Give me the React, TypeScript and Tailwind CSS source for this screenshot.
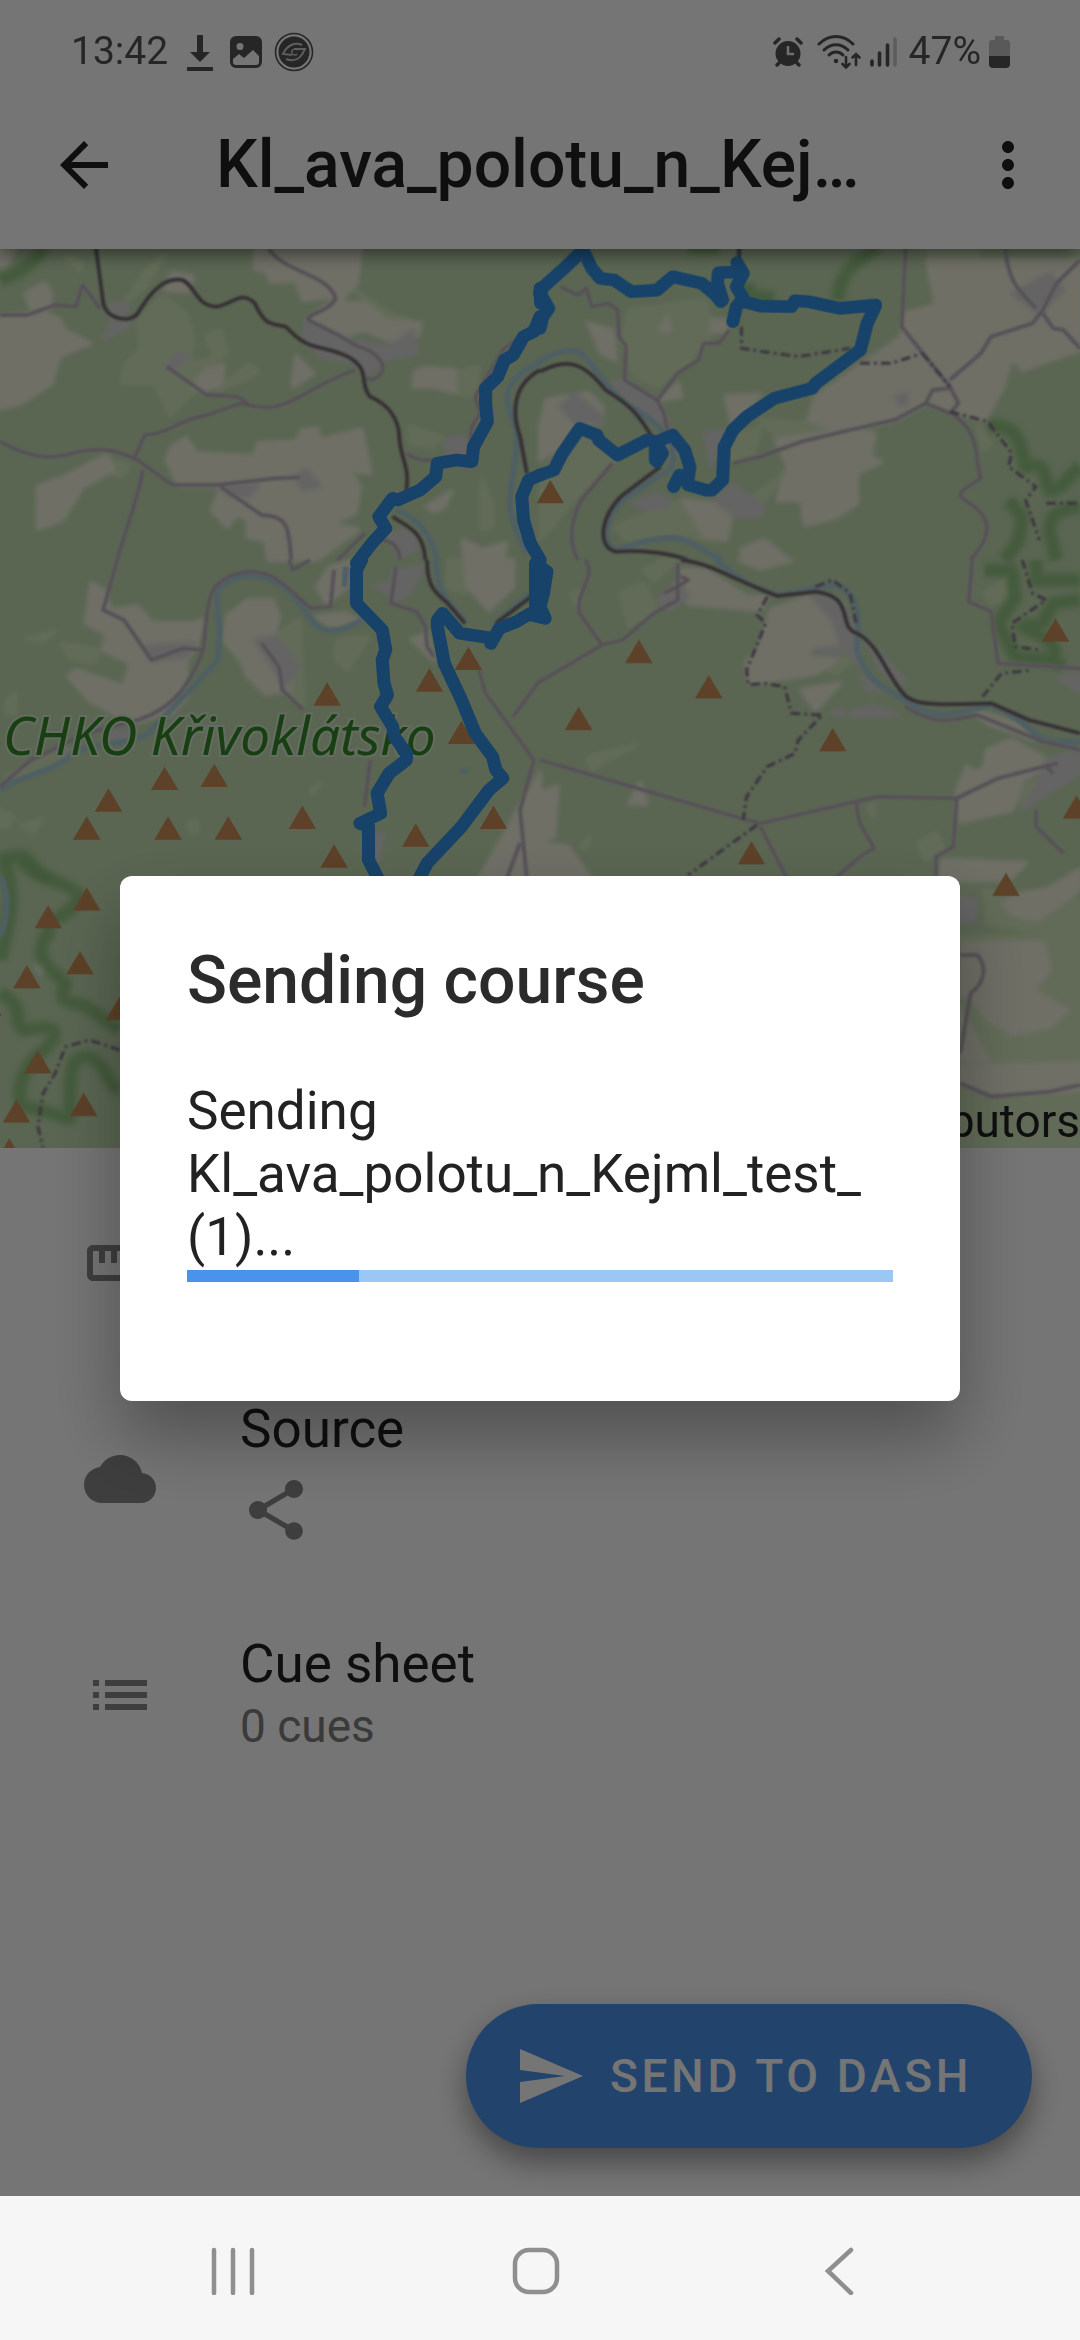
import React from "react";

const TOOLBAR_TITLE = "Kl_ava_polotu_n_Kej…";

/* ---------- Icons ---------- */

type IconProps = { d: string; className?: string };

function Icon({ d, className = "" }: IconProps) {
  return (
    <svg viewBox="0 0 24 24" fill="currentColor" aria-hidden="true" className={`size-[72px] shrink-0 ${className}`}>
      <path d={d} />
    </svg>
  );
}

const ICONS = {
  back: "M20 11H7.83l5.59-5.59L12 4l-8 8 8 8 1.41-1.41L7.83 13H20v-2z",
  more: "M12 8c1.1 0 2-.9 2-2s-.9-2-2-2-2 .9-2 2 .9 2 2 2zm0 2c-1.1 0-2 .9-2 2s.9 2 2 2 2-.9 2-2-.9-2-2-2zm0 6c-1.1 0-2 .9-2 2s.9 2 2 2 2-.9 2-2-.9-2-2-2z",
  ruler: "M21 6H3c-1.1 0-2 .9-2 2v8c0 1.1.9 2 2 2h18c1.1 0 2-.9 2-2V8c0-1.1-.9-2-2-2zm0 10H3V8h2v4h2V8h2v4h2V8h2v4h2V8h2v4h2V8h2v8z",
  cloud: "M19.35 10.04C18.67 6.59 15.64 4 12 4 9.11 4 6.6 5.64 5.35 8.04 2.34 8.36 0 10.91 0 14c0 3.31 2.69 6 6 6h13c2.76 0 5-2.24 5-5 0-2.64-2.05-4.78-4.65-4.96z",
  share: "M18 16.08c-.76 0-1.44.3-1.96.77L8.91 12.7c.05-.23.09-.46.09-.7s-.04-.47-.09-.7l7.05-4.11c.54.5 1.25.81 2.04.81 1.66 0 3-1.34 3-3s-1.34-3-3-3-3 1.34-3 3c0 .24.04.47.09.7L8.04 9.81C7.5 9.31 6.79 9 6 9c-1.66 0-3 1.34-3 3s1.34 3 3 3c.79 0 1.5-.31 2.04-.81l7.12 4.16c-.05.21-.08.43-.08.65 0 1.61 1.31 2.92 2.92 2.92s2.92-1.31 2.92-2.92-1.31-2.92-2.92-2.92z",
  list: "M3 13h2v-2H3v2zm0 4h2v-2H3v2zm0-8h2V7H3v2zm4 4h14v-2H7v2zm0 4h14v-2H7v2zM7 7v2h14V7H7z",
  send: "M2.01 21L23 12 2.01 3 2 10l15 2-15 2z",
};

/* ---------- Status bar ---------- */

function StatusBar() {
  return (
    <div className="flex h-[81px] items-center pt-[22px] pr-[70px] pl-[71px] text-[39px] leading-none text-[#535353]">
      <span>13:42</span>
      <svg viewBox="0 0 28 40" className="ml-[18px] h-10 w-7" fill="currentColor" aria-hidden="true">
        <path d="M11 3h6v17h7L14 30 4 20h7zM1 35h26v4H1z" />
      </svg>
      <svg viewBox="0 0 32 32" className="ml-4 size-8" aria-hidden="true">
        <path
          fill="currentColor"
          fillRule="evenodd"
          d="M6 0h20a6 6 0 0 1 6 6v20a6 6 0 0 1-6 6H6a6 6 0 0 1-6-6V6a6 6 0 0 1 6-6zM10 7a3.5 3.5 0 1 0 0 7 3.5 3.5 0 0 0 0-7zM3 23v3a3 3 0 0 0 3 3h20a3 3 0 0 0 3-3v-6l-6-6-9 8-5-4z"
        />
      </svg>
      <svg viewBox="0 0 40 40" className="ml-3 size-10" aria-hidden="true">
        <circle cx="20" cy="20" r="18.5" fill="none" stroke="currentColor" strokeWidth="1.6" />
        <circle cx="20" cy="20" r="15.5" fill="currentColor" />
        <g fill="none" stroke="#ccc" strokeWidth="2">
          <path d="M28 13c-7-3-15 0-19 9l9 1" />
          <path d="M12 27c8 3 15 0 19-10H20" />
          <path d="M23 18c-3-2-6 0-5 3s4 2 5 1" strokeWidth="1.4" />
        </g>
      </svg>

      <svg viewBox="0 0 30 30" className="ml-auto size-[30px]" aria-hidden="true">
        <circle cx="15" cy="16.5" r="12.5" fill="currentColor" />
        <path d="M2 6l4-4M28 6l-4-4M4 28l4-4M26 28l-4-4" stroke="currentColor" strokeWidth="3.5" strokeLinecap="round" />
        <path d="M15 9v8h6" fill="none" stroke="#f4f4f4" strokeWidth="2.6" />
      </svg>
      <svg viewBox="0 0 44 36" className="ml-[14px] h-9 w-11" fill="none" stroke="currentColor" strokeLinecap="round" aria-hidden="true">
        <path d="M2 10C12 0 26 0 36 10" strokeWidth="3" />
        <path d="M7 16c7-7 17-7 24 0" strokeWidth="3" />
        <path d="M12 21c4-4 10-4 14 0" strokeWidth="3" />
        <circle cx="19" cy="27" r="2.3" fill="currentColor" stroke="none" />
        <path d="M29 23v10M25.5 30l3.5 3.5 3.5-3.5M39 31V20M35.5 23.5l3.5-3.5 3.5 3.5" strokeWidth="2.6" />
      </svg>
      <svg viewBox="0 0 28 32" className="ml-2 h-8 w-7" stroke="currentColor" strokeWidth="3.6" strokeLinecap="round" aria-hidden="true">
        <path d="M3 25v4M10.5 17v12M18.5 9v20" />
        <path d="M26 3v26" opacity="0.3" />
      </svg>
      <span className="ml-3">47%</span>
      <svg viewBox="0 0 21 32" className="ml-2 h-8 w-[21px]" fill="currentColor" aria-hidden="true">
        <path d="M6 0h9v4h3a3 3 0 0 1 3 3v13H0V7a3 3 0 0 1 3-3h3z" opacity="0.35" />
        <path d="M0 20h21v8a4 4 0 0 1-4 4H4a4 4 0 0 1-4-4z" />
      </svg>
    </div>
  );
}

/* ---------- Map ---------- */

type Tile = {
  x: number;
  y: number;
  grass: string;
  farm: string;
  urban: string;
  roads: string;
  dashed: string;
  rail: string;
  river: string;
  nature: string;
  route: string;
  peaks: [number, number][];
};

const TILES: Tile[] = [
  {
    x: 0,
    y: 240,
    farm: "M0 230L130 220 175 240 185 270 260 310 170 350 150 430 60 490 0 505ZM75 160L130 130 150 165 140 205 90 205ZM0 0H60L20 70 0 80ZM745 0H1050L1035 130 990 180 960 170 880 180 860 120 790 125 770 90 740 85ZM890 240L960 190 1060 190 1120 240 1220 250 1215 285 1130 300 1060 270 990 290ZM850 440L860 350 910 400ZM560 440L600 390 650 380 640 430 600 450ZM1200 440L1205 395 1240 385 1320 390 1320 455 1260 440ZM485 660L500 620 540 595 570 640 740 650 750 610 860 605 880 570 920 565 930 600 1050 570 1075 700 1010 690 1045 740 1030 820 960 850 1040 870 1000 900 920 960H780L770 900 720 890 720 840 690 820 660 860 615 810 640 750 630 735 520 735ZM110 740L190 710 310 645 330 690 240 740 180 840 110 865ZM1240 800L1310 755 1290 800 1260 815ZM1345 900L1400 930 1470 910 1460 960H1350ZM480 150L500 100 560 110 545 155Z",
    grass: "M400 240L470 170 540 220 560 290 550 370 640 350 650 430 560 460 495 525 450 430 355 430 360 380 410 330ZM600 290L640 270 660 340 620 345ZM370 180L410 110 475 45 420 140ZM1320 400L1390 380 1380 470 1320 455ZM1400 720L1430 800 1430 860 1400 870ZM330 700L330 660 375 680 350 710ZM630 450L720 375 750 395 690 430ZM190 50L240 70 230 90ZM1190 560L1280 590 1260 620 1190 610ZM1030 150L1130 220 1210 250 1120 235Z",
    urban: "M890 240L1010 300 1130 320 1200 270 1210 340 1120 360 1060 410 1040 370 930 350 880 290ZM320 190L375 190 360 240 380 255 300 300 320 250ZM475 385L520 335 550 350 500 390ZM645 740L750 735 720 770 670 765ZM860 710L890 690 930 740 880 750ZM1120 880L1200 870 1210 930 1160 950ZM1290 600L1350 590 1360 640 1300 650Z",
    roads: "M0 225H80L160 195 220 200 240 135 290 205M780 27C830 100 950 100 975 175C950 220 890 220 895 240L990 290 1040 320C1090 330 1150 390 1080 420L1060 415M0 605C100 660 150 660 230 635C330 615 370 650 400 660L500 735H630L800 715 870 712M390 655L420 585C500 580 500 545 600 525L700 490C840 530 850 460 1030 390M485 380L600 465 690 470 720 490M415 690C400 780 370 850 340 960M640 740L760 825C830 830 840 850 845 960M1180 640C1220 670 1260 660 1290 655M1568 240L1460 330 1380 470 1395 520 1370 560 1365 620M1100 900C1140 900 1160 920 1160 960M980 960L1060 880",
    dashed: "",
    rail: "M278 20L300 190C310 240 380 250 400 220C440 150 480 110 530 120C570 140 570 200 630 200C680 190 700 150 740 190C770 260 790 250 830 260C900 340 930 310 1010 350C1080 390 1040 430 1075 470C1120 490 1160 530 1160 600C1165 660 1190 680 1180 750M1140 830C1180 860 1230 870 1235 960M1568 390C1480 440 1490 530 1510 590L1530 700",
    river: "M1568 365C1460 420 1460 470 1490 540C1520 620 1480 700 1480 800C1490 860 1510 900 1530 940M1150 810C1210 830 1250 880 1270 960",
    nature: "M0 120C50 100 90 80 130 20",
    route: "M1568 145L1570 190M1568 230L1550 275 1520 290 1490 345 1465 360 1445 410 1410 445V490L1415 545 1375 620 1370 665 1325 660 1270 670 1265 710 1220 750 1155 780 1140 775 1100 830 1120 865 1080 910 1035 970M1568 705L1535 720 1515 770 1520 840 1540 910 1568 960",
    peaks: [],
  },
  {
    x: 540,
    y: 240,
    farm: "M1125 60H1568V330L1480 360 1400 390 1370 350 1340 450 1290 540 1190 510 1120 490 1030 540 880 570 780 540 800 470 900 400 1050 290 1060 220 1150 195ZM685 600L880 570 970 580 960 650 990 665 920 700V790L860 830 770 855 760 780 690 780 720 680ZM20 480L140 460 180 500 180 550 100 560 60 620 0 660V560ZM140 250L210 270 220 360 180 340ZM415 780L560 800 540 900 480 890ZM585 930L650 900 720 960H590ZM400 430L410 470 350 480ZM540 470L640 465 560 560ZM500 240H540V275H500ZM350 270L370 230 375 275Z",
    grass: "M260 210L480 180 500 280 430 370 340 440 270 400 240 300ZM100 560L240 640 130 740 0 900V700L60 640ZM640 540L880 560 700 600ZM1130 20H1270V60H1130ZM220 860L420 780 500 900 400 880 250 900ZM620 770L710 700 650 780ZM540 600L640 560 620 640 560 660ZM1270 560L1310 610 1290 630Z",
    urban: "M60 500L100 460 180 530 180 550 100 545ZM200 430L250 420 350 490 380 570 400 620 380 680 360 560 280 500ZM270 790L330 760 380 780 360 805 300 810ZM505 780L560 730 650 800 640 830 570 830ZM475 580L540 570 500 680ZM1370 160L1480 100 1520 150 1450 220ZM1035 470L1065 460V490L1045 495Z",
    roads: "M1062 20L1050 260 1190 440 1215 490 1190 520 1120 490 1140 450 1190 445M1190 420L1280 340 1310 290 1430 250 1460 210 1500 130 1568 60M1350 20C1360 130 1390 150 1440 205M1460 220L1490 265 1520 270 1568 325M560 670L640 650 760 605 900 570 1030 540 1120 490M1195 520C1280 580 1260 640 1280 715C1210 760 1210 760 1240 785C1330 840 1300 900 1250 960M60 140L110 165 135 145 150 200 200 190 225 210 230 290 250 320 245 420 340 480 360 520 370 570M340 480L400 400 460 360 475 310 520 310 550 270M210 670L120 780C80 860 90 920 110 960",
    dashed: "M585 260V325L650 335 750 350 900 325M930 370L1020 370 1110 340M1110 340L1190 440M1190 515L1300 545 1370 640 1360 680 1440 740 1410 780 1450 900M1470 790H1568",
    rail: "M0 395C80 350 130 370 190 450C270 500 290 530 330 600M350 680L240 765C180 820 160 920 220 935C300 930 380 940 430 960M578 20V80",
    river: "M0 365C60 325 110 325 130 350C200 440 210 460 250 490C330 540 350 560 380 610C400 690 370 700 340 710L240 780C180 850 180 910 220 930C310 900 380 880 430 905C480 930 500 950 530 960",
    nature: "M980 20C900 80 870 100 865 180M600 130L610 165 680 175M430 22H520M1300 555C1380 560 1390 580 1410 680C1480 660 1460 720 1480 750C1520 750 1530 710 1568 680M1568 800C1490 810 1480 830 1480 880L1500 960M1360 780L1400 830 1390 900 1350 960",
    route: "M0 160L10 140 70 85 125 30 150 85 175 115 215 120 265 155 340 150 385 110 470 130 510 165 525 185M530 180L515 130 518 98 580 95M572 68L590 100 580 120 570 140 590 175 570 200 560 245M590 185L640 198 730 200 740 182 780 185 870 205 975 195 950 250 930 330 800 430 790 445 680 475 600 530 560 570 535 620 530 720 500 750H480L430 735M388 740L405 705 430 715 435 680 420 630 385 585 340 605 310 600 225 645 170 600 165 585 115 565 65 640 40 690 0 705M335 660V605L355 640 340 665M0 160L25 205 8 230 0 265",
    peaks: [[30, 790]],
  },
  {
    x: 0,
    y: 560,
    farm: "M250 190L265 70 300 90 320 150 400 140 440 190 560 190 590 180 570 260 540 300 540 410 500 460 380 490 260 420 200 350 220 330 360 380 380 310 300 270 310 220ZM660 170L720 120 790 120 810 170 790 230 850 320 840 390 770 400 720 350 700 300 650 240ZM920 80L960 20 1030 0V60L950 130ZM1350 0H1490V80L1420 150 1360 80ZM1390 960L1500 760 1568 640V960ZM920 170L1000 160 1040 180 960 200ZM1195 240L1240 220 1260 300 1230 270Z",
    grass: "M180 250L290 270 270 310 200 290ZM790 230L870 180 880 440 830 400ZM980 240L1070 230 1010 330 975 300ZM75 235L160 215 120 245ZM60 800L125 775 100 815ZM0 750L40 770 20 800 0 800ZM20 420L45 400V460H20ZM20 650L200 560 190 600 60 650ZM900 690L930 670 910 700ZM545 790L570 780 575 810 555 820ZM1300 0L1350 0 1350 100 1300 80Z",
    urban: "M420 260L560 250 540 290 440 300ZM740 240L800 230 870 320 830 380ZM1140 30L1230 20 1190 100 1140 130ZM330 510H390L370 540H310ZM1050 830L1115 820 1100 900 1060 890ZM1080 80L1130 70 1130 100Z",
    roads: "M340 0L300 150 360 180 440 300 530 265 590 270M0 680L90 600 250 520 400 480C520 440 560 350 590 270C600 180 600 120 625 80C680 20 760 30 800 55C850 90 880 130 905 145L960 140 970 30M760 250L810 320 820 390 880 450M1150 20L1135 130 1210 155 1235 200 1240 260 1260 290M1390 330L1410 400 1550 600 1510 750 1530 960M1568 360L1490 470M1510 850L1470 960M1075 600L1058 740M840 0L850 30 900 0",
    dashed: "",
    rail: "M1240 0C1240 90 1270 100 1300 130L1350 190M1440 190L1568 90",
    river: "M0 690C80 640 160 630 200 590C260 540 380 560 430 520L630 305C650 200 620 130 635 85C700 30 770 40 830 85C900 150 900 210 960 212C1010 210 1030 190 1050 180M1265 0C1270 100 1300 130 1350 180M1430 200L1550 90V20M1005 20L1000 80M1335 633H1360",
    nature: "M0 900C60 880 80 880 110 940L150 960",
    route: "M1050 0L1035 30V130L1110 210 1120 270 1110 300 1115 370 1125 405 1105 440 1140 500 1145 530 1180 580 1180 600 1130 640 1095 700 1105 760 1045 790 1070 800V900L1110 980M1205 980L1240 910 1340 800 1420 690 1460 655 1440 630 1430 590 1380 520 1340 420 1290 310 1270 200 1270 180 1285 160 1335 220 1430 235 1425 250 1450 205 1500 185 1540 160 1568 160M1555 10V140",
    peaks: [[950, 437], [1247, 395], [1360, 330], [1340, 552], [478, 690], [622, 681], [315, 755], [252, 839], [488, 839], [663, 839], [878, 807], [970, 923], [1207, 860], [1433, 807]],
  },
  {
    x: 540,
    y: 560,
    farm: "M670 150L780 110 880 130 900 200 900 260 790 260 770 290 860 300 800 340 610 370 600 310 640 260ZM760 390L870 370 800 450ZM1290 620L1300 570 1370 540 1490 610 1400 660 1370 750 1220 785 1210 700 1240 620 1260 640ZM0 850L80 860 150 960H0ZM410 30L480 30 600 110 660 110 640 150 430 130ZM260 730L290 670 310 730ZM0 700L50 680 40 830 0 840ZM1170 900L1410 910 1360 960H1160ZM1260 450L1390 490 1440 540 1300 490ZM580 0H730L640 25Z",
    grass: "M235 100L300 70 340 150 260 200 245 150ZM140 590L280 555 180 610 150 630ZM300 30L360 0H400L330 60ZM1290 100L1350 60 1350 120 1310 130ZM1100 850L1150 820 1170 860 1120 900ZM790 300L920 290 860 340ZM1380 690L1500 640 1400 740ZM120 860L145 830 130 865ZM950 740L970 730V770ZM90 100L120 90 110 140Z",
    urban: "M790 110L860 110 920 200 930 320 880 270 850 180ZM340 120L400 60 430 110 380 150ZM930 340L990 400 950 390ZM1500 350L1568 340V400ZM900 455L960 435 1040 465 900 470ZM1470 600L1568 570V640L1400 750 1440 680ZM940 230L1060 360 1050 380 990 330ZM850 450H880V465H850ZM800 270L880 260 860 290Z",
    roads: "M130 0C170 40 100 100 115 160L180 255M0 365L180 255 240 240 330 160 400 120V10M360 100L400 80 430 60 410 50M0 600L600 780 640 790 980 710 1210 715 1330 655 1500 610 1470 620 1490 640M640 800L720 960M920 730C920 800 950 820 970 865C920 890 890 930 850 960M1210 715L1200 860 1150 890V960M1255 0L1245 125 1310 155 1330 310 1568 325M1060 440C1150 500 1200 480 1270 465L1460 545 1568 570M1440 750V800L1520 880",
    dashed: "M660 110L630 165 655 190 600 330 605 375 650 370 710 380 730 460 820 465 750 540 740 580 660 620 600 710 590 780M630 795L430 945M1400 0L1430 100 1470 120 1370 190 1380 260 1450 270M1285 410L1340 340 1430 330M800 80L850 60 900 100 920 200",
    rail: "M410 0C500 10 560 60 690 108L800 95C920 110 860 200 920 220C980 250 1000 330 1050 395C1080 440 1150 435 1310 430L1420 480 1568 520",
    river: "M510 0C560 40 600 80 690 105C800 90 840 60 890 90C940 150 920 200 920 270C950 370 1000 380 1060 420C1150 490 1200 460 1310 435C1400 470 1430 530 1480 545H1568",
    nature: "M1290 30H1370L1380 110 1330 190 1380 290 1490 300 1520 320M1568 60H1440V0M1568 120L1490 130 1460 190 1400 200 1480 240 1500 290",
    route: "M0 20L20 35 10 100 0 140 15 175 -25 165M-5 10V150",
    peaks: [[287, 309], [490, 415], [112, 510], [850, 574], [1497, 245], [614, 913], [1558, 776]],
  },
  {
    x: 0,
    y: 860,
    farm: "M105 320L130 310 120 340Z",
    grass: "",
    urban: "",
    roads: "",
    dashed: "M348 570L260 540 190 560 160 640 125 700 110 800 125 863",
    rail: "",
    river: "M0 50C30 100 20 180 0 230",
    nature: "M60 0C100 60 220 70 230 110C200 180 130 170 140 220C90 290 140 320 190 370C170 430 190 420 250 440L348 510M0 400C80 440 30 480 70 510C180 490 170 520 130 570C50 620 40 740 80 740L200 775C210 650 190 600 250 590C310 600 310 680 348 690M0 300C30 180 50 100 10 0",
    route: "",
    peaks: [[252, 152], [140, 205], [232, 343], [78, 385], [347, 480], [110, 640], [243, 768], [48, 788], [27, 905], [-35, 467]],
  },
  {
    x: 540,
    y: 860,
    farm: "M1350 130L1400 100 1470 90 1568 30V90L1440 180 1370 160ZM1230 250L1460 250 1480 330 1430 390 1530 450 1480 500 1370 520 1300 480 1260 420 1220 400ZM1220 620L1568 610V690L1320 700 1220 660ZM1220 450L1300 600 1230 600Z",
    grass: "M1220 230L1568 230V863H1220ZM1290 90L1568 120V230L1300 190Z",
    urban: "M1220 110L1270 120 1260 180 1220 190Z",
    roads: "M1220 285H1270C1300 320 1290 370 1250 400L1220 580M1220 670L1310 710 1480 695 1568 675",
    dashed: "",
    rail: "",
    river: "",
    nature: "",
    route: "",
    peaks: [[1353, 108]],
  },
];

function place(tile: Tile) {
  return `translate(${tile.x} ${tile.y}) scale(0.3444 0.3333)`;
}

function CourseMap() {
  return (
    <div className="relative bg-[#c4deb3]">
      <svg viewBox="0 249 1080 899" className="block h-auto w-full" role="img" aria-label="Course map">
        <g className="blur-[2px]">
          {TILES.map((t, i) => (
            <g key={i} transform={place(t)} strokeLinejoin="round">
              <path d={t.grass} fill="#d6eabf" stroke="#d6eabf" strokeWidth="14" />
              <path d={t.farm} fill="#f1f1df" stroke="#f1f1df" strokeWidth="14" />
              <path d={t.urban} fill="#dbdad9" stroke="#dbdad9" strokeWidth="10" />
            </g>
          ))}
          {TILES.map((t, i) => (
            <g key={i} transform={place(t)} fill="none" strokeLinejoin="round">
              <path d={t.nature} stroke="#8cc07c" strokeOpacity="0.35" strokeWidth="52" />
              <path d={t.nature} stroke="#8cc07c" strokeOpacity="0.7" strokeWidth="30" />
            </g>
          ))}
        </g>
        <g className="blur-[1px]">
          {TILES.map((t, i) => (
            <g key={i} transform={place(t)} fill="none" strokeLinejoin="round">
              <path d={t.river} stroke="#abcfd8" strokeWidth="17" />
              <path d={t.roads} stroke="#d0c8d0" strokeWidth="13" />
              <path d={t.roads} stroke="#b4aab4" strokeWidth="7" />
              <path d={t.dashed} stroke="#85748a" strokeWidth="9" strokeDasharray="28 12 8 12" />
              <path d={t.rail} stroke="#a19a9c" strokeWidth="13" />
              <path d={t.rail} stroke="#6c6166" strokeWidth="8" />
            </g>
          ))}
        </g>
        {TILES.map((t, i) => (
          <g key={i} transform={place(t)} fill="#ca8e58">
            {t.peaks.map(([x, y]) => (
              <path key={`${x}-${y}`} d={`M${x} ${y - 70}L${x + 40} ${y}H${x - 40}Z`} />
            ))}
          </g>
        ))}
        <text
          x="3"
          y="755"
          fontFamily="'Noto Sans', sans-serif"
          fontStyle="italic"
          fontSize="53"
          fill="#368a28"
          stroke="#dbe9d3"
          strokeWidth="4"
          paintOrder="stroke"
        >
          CHKO Křivoklátsko
        </text>
        {TILES.map((t, i) => (
          <path
            key={i}
            transform={place(t)}
            d={t.route}
            fill="none"
            stroke="#3490e4"
            strokeWidth="38"
            strokeLinecap="round"
            strokeLinejoin="round"
          />
        ))}
      </svg>
      <p className="absolute right-0 bottom-0 text-[46px] leading-[54px] whitespace-nowrap text-[#222222]">
        © OpenStreetMap contributors
      </p>
    </div>
  );
}

/* ---------- Details ---------- */

function DetailRow({ icon, children }: { icon: string; children?: React.ReactNode }) {
  return (
    <li className="flex h-[216px] items-center gap-[84px] pl-[84px]">
      <Icon d={icon} className="text-[#878787]" />
      <div className="flex flex-col pb-1">{children}</div>
    </li>
  );
}

function ProgressDialog() {
  return (
    <div
      role="dialog"
      aria-modal="true"
      aria-labelledby="dialog-title"
      className="w-full rounded-xl bg-white px-[67px] pt-[63px] pb-[119px] shadow-[0_36px_72px_rgba(0,0,0,0.32)]"
    >
      <h2 id="dialog-title" className="text-[66px] leading-[84px] font-medium text-[#2b2b2b]">
        Sending course
      </h2>
      <p className="mt-[57px] text-[53px] leading-[63px] text-[#222222]">
        Sending Kl_ava_polotu_n_Kejml_test_
        <wbr />
        (1)...
      </p>
      <div
        role="progressbar"
        aria-label="Sending course"
        aria-valuenow={24}
        aria-valuemin={0}
        aria-valuemax={100}
        className="mt-px h-3 bg-[#9bc7f4]"
      >
        <div className="h-full bg-[#4993ec]" style={{ width: "24.3%" }} />
      </div>
    </div>
  );
}

export default function App() {
  return (
    <div className="flex min-h-screen flex-col bg-white font-['Roboto',sans-serif]">
      <div className="relative flex flex-1 flex-col">
        <header className="relative z-10 bg-white shadow-[0_6px_16px_rgba(0,0,0,0.45)]">
          <StatusBar />
          <div className="flex h-[168px] items-center px-9">
            <button type="button" aria-label="Back" className="ml-3 text-[#222222]">
              <Icon d={ICONS.back} />
            </button>
            <h1 className="ml-24 min-w-0 flex-1 truncate text-[66px] leading-[84px] font-medium text-[#222222]">
              {TOOLBAR_TITLE}
            </h1>
            <button type="button" aria-label="More options" className="ml-[72px] text-[#222222]">
              <Icon d={ICONS.more} />
            </button>
          </div>
        </header>

        <CourseMap />

        <ul className="pt-[7px] text-[#222222]">
          <DetailRow icon={ICONS.ruler} />
          <DetailRow icon={ICONS.cloud}>
            <span className="text-[53px] leading-[62px]">Source</span>
            <Icon d={ICONS.share} className="mt-3.5 mb-2.5 text-[#878787]" />
          </DetailRow>
          <DetailRow icon={ICONS.list}>
            <span className="text-[53px] leading-[62px]">Cue sheet</span>
            <span className="mt-1 text-[46px] leading-[54px] text-[#7e7e7e]">0 cues</span>
          </DetailRow>
        </ul>

        <div className="mt-auto flex justify-end pr-12 pb-12">
          <button
            type="button"
            className="flex h-36 items-center gap-6 rounded-full bg-[#4a94eb] pr-[60px] pl-12 text-[46px] font-medium tracking-[0.08em] text-white shadow-[0_14px_30px_rgba(0,0,0,0.4)]"
          >
            <Icon d={ICONS.send} />
            SEND TO DASH
          </button>
        </div>

        <div className="absolute inset-0 z-20 flex items-center bg-black/54 px-[120px] pt-[81px]">
          <ProgressDialog />
        </div>
      </div>

      <nav className="flex h-36 items-center bg-[#f6f6f6] pt-1.5 pr-[90px] pl-[82px] text-[#8f8f8f]">
        <button type="button" aria-label="Recent apps" className="flex flex-1 justify-center">
          <svg viewBox="0 0 48 48" className="size-12" stroke="currentColor" strokeWidth="4.5" strokeLinecap="round">
            <path d="M5 3v43M24 3v43M43 3v43" />
          </svg>
        </button>
        <button type="button" aria-label="Home" className="flex flex-1 justify-center">
          <svg viewBox="0 0 48 48" className="size-12" fill="none" stroke="currentColor" strokeWidth="4.5">
            <rect x="3" y="3" width="42" height="42" rx="14" />
          </svg>
        </button>
        <button type="button" aria-label="Back" className="flex flex-1 justify-center">
          <svg viewBox="0 0 48 48" className="size-12" fill="none" stroke="currentColor" strokeWidth="4.5" strokeLinecap="round">
            <path d="M36 3L13 24l23 22" />
          </svg>
        </button>
      </nav>
    </div>
  );
}
